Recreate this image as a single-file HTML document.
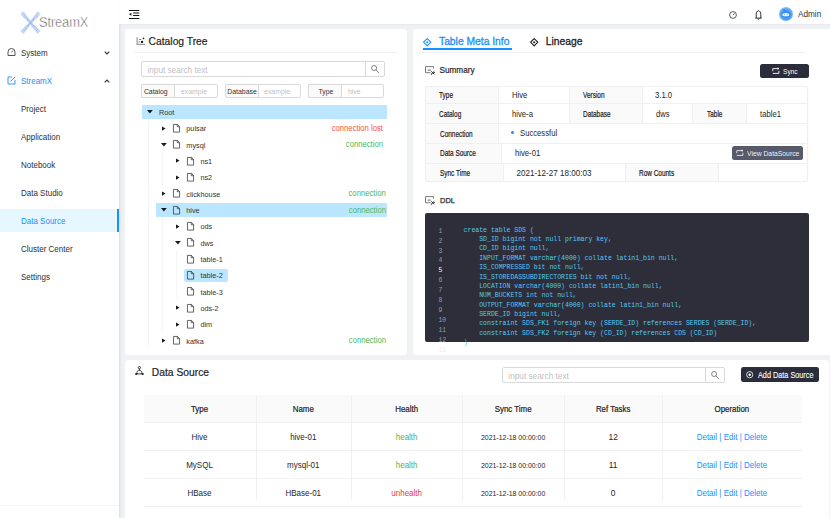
<!DOCTYPE html>
<html><head><meta charset="utf-8">
<style>
*{box-sizing:border-box;margin:0;padding:0}
html,body{width:830px;height:518px;overflow:hidden;background:#f0f1f5;font-family:"Liberation Sans",sans-serif;color:#262626}
#side{position:absolute;left:0;top:0;width:119px;height:518px;background:#fff;box-shadow:1px 0 2px rgba(0,21,41,.10)}
#hdr{position:absolute;left:119px;top:0;width:711px;height:24px;background:#fff;box-shadow:0 1px 2px rgba(0,21,41,.04)}
.card{position:absolute;background:#fff;border-radius:3px}
.t{position:absolute;white-space:nowrap;line-height:1}
svg{position:absolute;overflow:visible}
.mi{font-size:8px;color:#303030;left:21px;transform:scaleY(1.08);transform-origin:0 6.77px}
</style></head><body>
<div id="side">
  <!-- logo -->
  <svg style="left:21px;top:11.5px" width="19" height="21.5" viewBox="0 0 19 21.5"><clipPath id="cl"><rect x="-.5" y="-.5" width="20" height="22.5"/></clipPath><g clip-path="url(#cl)"><path d="M1.5 1.5L17.5 20M17.5 1.5L1.5 20" stroke="#dce8fb" stroke-width="3"/><path d="M2.04 -0.68L9.91 10.39L19.92 19.55" stroke="#a8c4f4" stroke-width=".75" stroke-dasharray="1.3 .6" fill="none"/><path d="M1.30 -0.02L9.71 10.57L19.18 20.21" stroke="#7f9fe8" stroke-width=".75" stroke-dasharray="1.3 .6" fill="none"/><path d="M0.56 0.63L9.50 10.75L18.44 20.87" stroke="#b9d2f7" stroke-width=".75" stroke-dasharray="1.3 .6" fill="none"/><path d="M-0.18 1.29L9.29 10.93L17.70 21.52" stroke="#8aa6ea" stroke-width=".75" stroke-dasharray="1.3 .6" fill="none"/><path d="M-0.92 1.95L9.09 11.11L16.96 22.18" stroke="#a8c4f4" stroke-width=".75" stroke-dasharray="1.3 .6" fill="none"/><path d="M19.92 1.95L9.91 11.11L2.04 22.18" stroke="#a8c4f4" stroke-width=".75" stroke-dasharray="1.3 .6" fill="none"/><path d="M19.18 1.29L9.71 10.93L1.30 21.52" stroke="#7f9fe8" stroke-width=".75" stroke-dasharray="1.3 .6" fill="none"/><path d="M18.44 0.63L9.50 10.75L0.56 20.87" stroke="#b9d2f7" stroke-width=".75" stroke-dasharray="1.3 .6" fill="none"/><path d="M17.70 -0.02L9.29 10.57L-0.18 20.21" stroke="#8aa6ea" stroke-width=".75" stroke-dasharray="1.3 .6" fill="none"/><path d="M16.96 -0.68L9.09 10.39L-0.92 19.55" stroke="#a8c4f4" stroke-width=".75" stroke-dasharray="1.3 .6" fill="none"/></g></svg>
  <svg style="left:39.3px;top:12px" width="50" height="18" viewBox="0 0 50 18"><text x="0" y="15" font-family="Liberation Sans" font-size="14" fill="#3a3a3a" stroke="#fff" stroke-width=".5" transform="scale(.915 1)" letter-spacing="-.1">StreamX</text></svg>
  <!-- System -->
  <svg style="left:7px;top:48px" width="9" height="8" viewBox="0 0 9 8"><path d="M1 7.5V4A3.5 3.5 0 0 1 8 4V7.5Z" fill="none" stroke="#444" stroke-width=".9"/><path d="M4.5 4.5L6 2.5" stroke="#444" stroke-width=".8"/></svg>
  <div class="t mi" style="top:50.0px">System</div>
  <svg style="left:104px;top:51px" width="6" height="4" viewBox="0 0 6 4"><path d="M.7 .7L3 3 5.3 .7" fill="none" stroke="#333" stroke-width="1.1"/></svg>
  <!-- StreamX -->
  <svg style="left:7px;top:76px" width="9" height="9" viewBox="0 0 9 9"><path d="M5 1H1V8H8V4" fill="none" stroke="#1890ff" stroke-width=".9"/><path d="M3.5 5.5L8 1" stroke="#1890ff" stroke-width=".9"/></svg>
  <div class="t mi" style="top:78.0px;color:#1890ff">StreamX</div>
  <svg style="left:104px;top:79px" width="6" height="4" viewBox="0 0 6 4"><path d="M.7 3.3L3 1 5.3 3.3" fill="none" stroke="#333" stroke-width="1.1"/></svg>
  <div class="t mi" style="top:106.0px">Project</div>
  <div class="t mi" style="top:134.0px">Application</div>
  <div class="t mi" style="top:162.0px">Notebook</div>
  <div class="t mi" style="top:190.0px">Data Studio</div>
  <div style="position:absolute;left:0;top:209px;width:119px;height:23px;background:#e6f7ff;border-right:2px solid #1890ff"></div>
  <div class="t mi" style="top:218.0px;color:#1890ff">Data Source</div>
  <div class="t mi" style="top:246.0px">Cluster Center</div>
  <div class="t mi" style="top:274.0px">Settings</div>
  <div style="position:absolute;left:0;top:505px;width:119px;height:1px;background:#f7f7f7"></div>
</div>
<div id="hdr">
  <svg style="left:10px;top:0px" width="11" height="20" viewBox="0 0 11 20"><path d="M0 10.5H10.3M4.1 13H10.3M4.1 15.5H10.3M0 18.5H10.3" stroke="#111" stroke-width="1"/><path d="M0 14.2L2.4 12.7V15.7Z" fill="#111"/></svg>
  <svg style="left:610px;top:10.5px" width="8" height="8" viewBox="0 0 8 8"><circle cx="4" cy="4" r="3.4" fill="none" stroke="#333" stroke-width=".8"/><path d="M4 4L5.5 2.3" stroke="#333" stroke-width=".8"/></svg>
  <svg style="left:635.5px;top:9.5px" width="8" height="10" viewBox="0 0 8 10"><path d="M1.2 8V4.2C1.2 2.4 2.3 .7 3.5 .7S5.8 2.4 5.8 4.2V8M.3 8.1H6.8M2.6 8.8L3.5 9.3 4.4 8.8" fill="none" stroke="#1a1a1a" stroke-width=".9" stroke-linejoin="round"/></svg>
  <div style="position:absolute;left:660px;top:7px;width:14.2px;height:14.2px;border-radius:50%;background:radial-gradient(circle at 50% 55%,#3f92f2 0,#4d9cf4 45%,#8ac6fb 75%,#9dd0fc 100%)"></div>
  <svg style="left:660px;top:7px" width="14" height="14" viewBox="0 0 14 14"><path d="M5 3L6.5 5.2" stroke="#2f7fe6" stroke-width=".8"/><circle cx="4.8" cy="2.8" r=".7" fill="#2f7fe6"/><ellipse cx="7.2" cy="7.6" rx="4.3" ry="3.2" fill="#3a8cf0"/><ellipse cx="6.8" cy="7.7" rx="3.4" ry="1.6" fill="#fff"/><circle cx="5.6" cy="7.7" r=".55" fill="#3a8cf0"/><circle cx="8" cy="7.7" r=".55" fill="#3a8cf0"/></svg>
  <div class="t" style="left:679px;top:10.5px;font-size:8.2px;color:#333;transform:scaleY(1.08);transform-origin:0 6.94px">Admin</div>
</div>

<div class="card" style="left:125px;top:29px;width:282px;height:326px"></div>
<div class="card" style="left:413px;top:29px;width:417px;height:326px;border-radius:3px 0 0 3px"></div>
<div class="card" style="left:125px;top:360px;width:704px;height:158px;border-radius:3px 3px 0 0"></div>
<svg style="left:133px;top:33px" width="16" height="16" viewBox="0 0 16 16"><path d="M4.1 4.2V11.3H12" fill="none" stroke="#9a9a9a" stroke-width="1.2"/><rect x="5.3" y="8.3" width="1.8" height="1.2" fill="#999"/><rect x="6.2" y="6" width="2" height=".9" fill="#666"/><rect x="8" y="7.9" width="2.1" height="2" fill="#111"/><circle cx="10.5" cy="5.4" r=".8" fill="#222"/></svg>
<div class="t" style="left:148.60px;top:36.85px;font-size:10.3px;color:#1f1f1f;transform:scale(1.0,1.07);transform-origin:0 8.65px;-webkit-text-stroke:.2px #1f1f1f">Catalog Tree</div>
<div style="position:absolute;left:135.00px;top:52.00px;width:262.00px;height:1.00px;background:#f0f0f0"></div>
<div style="position:absolute;left:141.00px;top:61.00px;width:243.50px;height:15.50px;border:1px solid #d9d9d9;border-radius:2px"></div>
<div style="position:absolute;left:365.00px;top:61.00px;width:19.50px;height:15.50px;border-left:1px solid #d9d9d9"></div>
<svg style="left:370.5px;top:65px" width="9" height="9" viewBox="0 0 9 9"><circle cx="3.1" cy="3" r="2.5" fill="none" stroke="#666" stroke-width=".8"/><path d="M4.9 4.9L8 7.9" stroke="#666" stroke-width=".8"/></svg>
<div class="t" style="left:147.50px;top:66.90px;font-size:8.2px;color:#bfbfbf;transform:scale(1.0,1.07);transform-origin:0 6.60px;">input search text</div>
<div style="position:absolute;left:141.00px;top:84.30px;width:76.60px;height:13.60px;border:1px solid #d9d9d9;border-radius:2px"></div>
<div style="position:absolute;left:141.00px;top:84.30px;width:34.40px;height:13.60px;background:#fafafa;border:1px solid #d9d9d9;border-radius:2px 0 0 2px"></div>
<div class="t" style="left:143.90px;top:88.55px;font-size:6.9px;color:#333;transform:scale(1.0,1.07);transform-origin:0 5.95px;">Catalog</div>
<div class="t" style="left:181.00px;top:88.55px;font-size:6.9px;color:#bfbfbf;transform:scale(1.0,1.07);transform-origin:0 5.95px;">example</div>
<div style="position:absolute;left:224.50px;top:84.30px;width:76.10px;height:13.60px;border:1px solid #d9d9d9;border-radius:2px"></div>
<div style="position:absolute;left:224.50px;top:84.30px;width:34.00px;height:13.60px;background:#fafafa;border:1px solid #d9d9d9;border-radius:2px 0 0 2px"></div>
<div class="t" style="left:227.30px;top:88.55px;font-size:6.9px;color:#333;transform:scale(1.0,1.07);transform-origin:0 5.95px;">Database</div>
<div class="t" style="left:264.10px;top:88.55px;font-size:6.9px;color:#bfbfbf;transform:scale(1.0,1.07);transform-origin:0 5.95px;">example</div>
<div style="position:absolute;left:307.60px;top:84.30px;width:76.90px;height:13.60px;border:1px solid #d9d9d9;border-radius:2px"></div>
<div style="position:absolute;left:307.60px;top:84.30px;width:34.70px;height:13.60px;background:#fafafa;border:1px solid #d9d9d9;border-radius:2px 0 0 2px"></div>
<div class="t" style="left:318.40px;top:88.55px;font-size:6.9px;color:#333;transform:scale(1.0,1.07);transform-origin:0 5.95px;">Type</div>
<div class="t" style="left:347.90px;top:88.55px;font-size:6.9px;color:#bfbfbf;transform:scale(1.0,1.07);transform-origin:0 5.95px;">hive</div>
<div style="position:absolute;left:148.00px;top:119.00px;width:1.00px;height:228.00px;background:#f5f5f5"></div>
<div style="position:absolute;left:162.00px;top:152.00px;width:1.00px;height:33.00px;background:#f5f5f5"></div>
<div style="position:absolute;left:162.00px;top:217.00px;width:1.00px;height:115.00px;background:#f5f5f5"></div>
<div style="position:absolute;left:176.00px;top:250.00px;width:1.00px;height:49.00px;background:#f5f5f5"></div>
<div style="position:absolute;left:142.00px;top:105.00px;width:245.00px;height:13.80px;background:#bae7ff;border-radius:1px"></div>
<svg style="left:146.50px;top:110.30px" width="6" height="4" viewBox="0 0 6 4"><path d="M0 0H5.8L2.9 3.4Z" fill="#1a1a1a"/></svg>
<div class="t" style="left:158.90px;top:109.35px;font-size:7.3px;color:#333;transform:scale(1.0,1.07);transform-origin:0 6.15px;">Root</div>
<svg style="left:161.80px;top:125.63px" width="4" height="6" viewBox="0 0 4 6"><path d="M0 .4V4.8L3.5 2.6Z" fill="#1a1a1a"/></svg>
<svg style="left:173.20px;top:124.03px" width="7" height="9" viewBox="0 0 7 9"><path d="M.45 .45H4.5L6.6 2.5V8.1H.45Z M4.3 .45V2.7H6.6" fill="none" stroke="#333" stroke-width=".75" stroke-linejoin="round"/></svg>
<div class="t" style="left:186.30px;top:125.35px;font-size:7.3px;color:#333;transform:scale(1.0,1.07);transform-origin:0 6.15px;">pulsar</div>
<div class="t" style="right:447.00px;top:125.15px;font-size:7.7px;color:#f4553c;transform:scale(1.0,1.07);transform-origin:100% 6.35px;">connection lost</div>
<svg style="left:160.50px;top:142.96px" width="6" height="4" viewBox="0 0 6 4"><path d="M0 0H5.8L2.9 3.4Z" fill="#1a1a1a"/></svg>
<svg style="left:173.20px;top:140.36px" width="7" height="9" viewBox="0 0 7 9"><path d="M.45 .45H4.5L6.6 2.5V8.1H.45Z M4.3 .45V2.7H6.6" fill="none" stroke="#333" stroke-width=".75" stroke-linejoin="round"/></svg>
<div class="t" style="left:186.30px;top:142.35px;font-size:7.3px;color:#333;transform:scale(1.0,1.07);transform-origin:0 6.15px;">mysql</div>
<div class="t" style="right:447.00px;top:141.15px;font-size:7.7px;color:#4fb85a;transform:scale(1.0,1.07);transform-origin:100% 6.35px;">connection</div>
<svg style="left:176.10px;top:158.29px" width="4" height="6" viewBox="0 0 4 6"><path d="M0 .4V4.8L3.5 2.6Z" fill="#1a1a1a"/></svg>
<svg style="left:187.30px;top:156.69px" width="7" height="9" viewBox="0 0 7 9"><path d="M.45 .45H4.5L6.6 2.5V8.1H.45Z M4.3 .45V2.7H6.6" fill="none" stroke="#333" stroke-width=".75" stroke-linejoin="round"/></svg>
<div class="t" style="left:200.40px;top:158.35px;font-size:7.3px;color:#333;transform:scale(1.0,1.07);transform-origin:0 6.15px;">ns1</div>
<svg style="left:176.10px;top:174.62px" width="4" height="6" viewBox="0 0 4 6"><path d="M0 .4V4.8L3.5 2.6Z" fill="#1a1a1a"/></svg>
<svg style="left:187.30px;top:173.02px" width="7" height="9" viewBox="0 0 7 9"><path d="M.45 .45H4.5L6.6 2.5V8.1H.45Z M4.3 .45V2.7H6.6" fill="none" stroke="#333" stroke-width=".75" stroke-linejoin="round"/></svg>
<div class="t" style="left:200.40px;top:174.35px;font-size:7.3px;color:#333;transform:scale(1.0,1.07);transform-origin:0 6.15px;">ns2</div>
<svg style="left:161.80px;top:190.95px" width="4" height="6" viewBox="0 0 4 6"><path d="M0 .4V4.8L3.5 2.6Z" fill="#1a1a1a"/></svg>
<svg style="left:173.20px;top:189.35px" width="7" height="9" viewBox="0 0 7 9"><path d="M.45 .45H4.5L6.6 2.5V8.1H.45Z M4.3 .45V2.7H6.6" fill="none" stroke="#333" stroke-width=".75" stroke-linejoin="round"/></svg>
<div class="t" style="left:186.30px;top:191.35px;font-size:7.3px;color:#333;transform:scale(1.0,1.07);transform-origin:0 6.15px;">clickhouse</div>
<div class="t" style="right:444.30px;top:190.15px;font-size:7.7px;color:#4fb85a;transform:scale(1.0,1.07);transform-origin:100% 6.35px;">connection</div>
<div style="position:absolute;left:155.80px;top:202.98px;width:231.20px;height:13.80px;background:#bae7ff;border-radius:1px"></div>
<svg style="left:160.50px;top:208.28px" width="6" height="4" viewBox="0 0 6 4"><path d="M0 0H5.8L2.9 3.4Z" fill="#1a1a1a"/></svg>
<svg style="left:173.20px;top:205.68px" width="7" height="9" viewBox="0 0 7 9"><path d="M.45 .45H4.5L6.6 2.5V8.1H.45Z M4.3 .45V2.7H6.6" fill="none" stroke="#333" stroke-width=".75" stroke-linejoin="round"/></svg>
<div class="t" style="left:186.30px;top:207.35px;font-size:7.3px;color:#333;transform:scale(1.0,1.07);transform-origin:0 6.15px;">hive</div>
<div class="t" style="right:444.00px;top:207.15px;font-size:7.7px;color:#4fb85a;transform:scale(1.0,1.07);transform-origin:100% 6.35px;">connection</div>
<svg style="left:176.10px;top:223.61px" width="4" height="6" viewBox="0 0 4 6"><path d="M0 .4V4.8L3.5 2.6Z" fill="#1a1a1a"/></svg>
<svg style="left:187.30px;top:222.01px" width="7" height="9" viewBox="0 0 7 9"><path d="M.45 .45H4.5L6.6 2.5V8.1H.45Z M4.3 .45V2.7H6.6" fill="none" stroke="#333" stroke-width=".75" stroke-linejoin="round"/></svg>
<div class="t" style="left:200.40px;top:223.35px;font-size:7.3px;color:#333;transform:scale(1.0,1.07);transform-origin:0 6.15px;">ods</div>
<svg style="left:174.80px;top:240.94px" width="6" height="4" viewBox="0 0 6 4"><path d="M0 0H5.8L2.9 3.4Z" fill="#1a1a1a"/></svg>
<svg style="left:187.30px;top:238.34px" width="7" height="9" viewBox="0 0 7 9"><path d="M.45 .45H4.5L6.6 2.5V8.1H.45Z M4.3 .45V2.7H6.6" fill="none" stroke="#333" stroke-width=".75" stroke-linejoin="round"/></svg>
<div class="t" style="left:200.40px;top:240.35px;font-size:7.3px;color:#333;transform:scale(1.0,1.07);transform-origin:0 6.15px;">dws</div>
<svg style="left:187.30px;top:254.67px" width="7" height="9" viewBox="0 0 7 9"><path d="M.45 .45H4.5L6.6 2.5V8.1H.45Z M4.3 .45V2.7H6.6" fill="none" stroke="#333" stroke-width=".75" stroke-linejoin="round"/></svg>
<div class="t" style="left:200.40px;top:256.35px;font-size:7.3px;color:#333;transform:scale(1.0,1.07);transform-origin:0 6.15px;">table-1</div>
<div style="position:absolute;left:184.00px;top:268.60px;width:44.00px;height:13.40px;background:#bae7ff;border-radius:2px"></div>
<svg style="left:187.30px;top:271.00px" width="7" height="9" viewBox="0 0 7 9"><path d="M.45 .45H4.5L6.6 2.5V8.1H.45Z M4.3 .45V2.7H6.6" fill="none" stroke="#333" stroke-width=".75" stroke-linejoin="round"/></svg>
<div class="t" style="left:200.40px;top:272.35px;font-size:7.3px;color:#333;transform:scale(1.0,1.07);transform-origin:0 6.15px;">table-2</div>
<svg style="left:187.30px;top:287.33px" width="7" height="9" viewBox="0 0 7 9"><path d="M.45 .45H4.5L6.6 2.5V8.1H.45Z M4.3 .45V2.7H6.6" fill="none" stroke="#333" stroke-width=".75" stroke-linejoin="round"/></svg>
<div class="t" style="left:200.40px;top:289.35px;font-size:7.3px;color:#333;transform:scale(1.0,1.07);transform-origin:0 6.15px;">table-3</div>
<svg style="left:176.10px;top:305.26px" width="4" height="6" viewBox="0 0 4 6"><path d="M0 .4V4.8L3.5 2.6Z" fill="#1a1a1a"/></svg>
<svg style="left:187.30px;top:303.66px" width="7" height="9" viewBox="0 0 7 9"><path d="M.45 .45H4.5L6.6 2.5V8.1H.45Z M4.3 .45V2.7H6.6" fill="none" stroke="#333" stroke-width=".75" stroke-linejoin="round"/></svg>
<div class="t" style="left:200.40px;top:305.35px;font-size:7.3px;color:#333;transform:scale(1.0,1.07);transform-origin:0 6.15px;">ods-2</div>
<svg style="left:176.10px;top:321.59px" width="4" height="6" viewBox="0 0 4 6"><path d="M0 .4V4.8L3.5 2.6Z" fill="#1a1a1a"/></svg>
<svg style="left:187.30px;top:319.99px" width="7" height="9" viewBox="0 0 7 9"><path d="M.45 .45H4.5L6.6 2.5V8.1H.45Z M4.3 .45V2.7H6.6" fill="none" stroke="#333" stroke-width=".75" stroke-linejoin="round"/></svg>
<div class="t" style="left:200.40px;top:321.35px;font-size:7.3px;color:#333;transform:scale(1.0,1.07);transform-origin:0 6.15px;">dim</div>
<svg style="left:161.80px;top:337.92px" width="4" height="6" viewBox="0 0 4 6"><path d="M0 .4V4.8L3.5 2.6Z" fill="#1a1a1a"/></svg>
<svg style="left:173.20px;top:336.32px" width="7" height="9" viewBox="0 0 7 9"><path d="M.45 .45H4.5L6.6 2.5V8.1H.45Z M4.3 .45V2.7H6.6" fill="none" stroke="#333" stroke-width=".75" stroke-linejoin="round"/></svg>
<div class="t" style="left:186.30px;top:338.35px;font-size:7.3px;color:#333;transform:scale(1.0,1.07);transform-origin:0 6.15px;">kafka</div>
<div class="t" style="right:444.00px;top:337.15px;font-size:7.7px;color:#4fb85a;transform:scale(1.0,1.07);transform-origin:100% 6.35px;">connection</div>
<svg style="left:422.8px;top:37.8px" width="9" height="9" viewBox="0 0 9 9"><path d="M4.2 .6L7.8 4.2 4.2 7.8 .6 4.2Z" fill="none" stroke="#1890ff" stroke-width="1.15" stroke-linejoin="round"/><circle cx="4.2" cy="4.2" r="1.05" fill="#1890ff"/></svg>
<div class="t" style="left:439.00px;top:36.85px;font-size:10.3px;color:#1890ff;transform:scale(1.0,1.07);transform-origin:0 8.65px;-webkit-text-stroke:.3px #1890ff">Table Meta Info</div>
<div style="position:absolute;left:423.00px;top:48.20px;width:89.00px;height:1.80px;background:#1890ff"></div>
<svg style="left:530.3px;top:37.8px" width="9" height="9" viewBox="0 0 9 9"><path d="M4.2 .6L7.8 4.2 4.2 7.8 .6 4.2Z" fill="none" stroke="#1f1f1f" stroke-width="1.15" stroke-linejoin="round"/><circle cx="4.2" cy="4.2" r="1.05" fill="#1f1f1f"/></svg>
<div class="t" style="left:545.80px;top:36.85px;font-size:10.3px;color:#1f1f1f;transform:scale(1.0,1.07);transform-origin:0 8.65px;-webkit-text-stroke:.3px #1f1f1f">Lineage</div>
<div style="position:absolute;left:417.00px;top:52.30px;width:388.00px;height:1.00px;background:#f0f0f0"></div>
<svg style="left:421px;top:62px" width="16" height="16" viewBox="0 0 16 16"><path d="M12.4 6.6V4.6H4.5V10.7H9.6" fill="none" stroke="#7a7a7a" stroke-width="1"/><path d="M6.6 8.1H9.8" stroke="#555" stroke-width=".9"/><path d="M10.3 9.3L13.3 12.2M13.3 9.3L10.3 12.2" stroke="#1a1a1a" stroke-width=".9"/><circle cx="10.5" cy="12" r=".6" fill="#1a1a1a"/><circle cx="13.3" cy="10.5" r=".6" fill="#1a1a1a"/></svg>
<div class="t" style="left:439.50px;top:66.90px;font-size:8.2px;color:#1f1f1f;transform:scale(1.0,1.07);transform-origin:0 6.60px;-webkit-text-stroke:.2px #1f1f1f">Summary</div>
<div style="position:absolute;left:760.20px;top:64.20px;width:48.50px;height:13.70px;background:#2b2d3b;border-radius:2.5px"></div>
<svg style="left:771.6px;top:67.2px" width="8" height="8" viewBox="0 0 8 8"><path d="M.8 4.2V1.6H6.6M.8 6.4H6.9V3.8" fill="none" stroke="#fff" stroke-width=".9"/><path d="M5.6 .2L7.3 1.6 5.6 3Z" fill="#fff"/></svg>
<div class="t" style="left:782.60px;top:68.00px;font-size:8px;color:#fff;transform:scale(0.82,1.0);transform-origin:0 6.50px;">Sync</div>
<div style="position:absolute;left:425.00px;top:86.00px;width:383.00px;height:96.20px;background:#fff;border-radius:3px;box-shadow:0 0 1px rgba(0,0,0,.10)"></div>
<div style="position:absolute;left:425.00px;top:86.00px;width:72.60px;height:17.40px;background:#fafafa"></div>
<div class="t" style="left:439.40px;top:91.20px;font-size:8.6px;color:#1a1a1a;transform:scale(0.75,1.0);transform-origin:0 7.30px;-webkit-text-stroke:.2px #1a1a1a">Type</div>
<div class="t" style="left:511.90px;top:91.95px;font-size:8.1px;color:#262626;transform:scale(0.95,1.07);transform-origin:0 6.55px;">Hive</div>
<div style="position:absolute;left:569.40px;top:86.00px;width:72.80px;height:17.40px;background:#fafafa"></div>
<div class="t" style="left:583.40px;top:91.20px;font-size:8.6px;color:#1a1a1a;transform:scale(0.75,1.0);transform-origin:0 7.30px;-webkit-text-stroke:.2px #1a1a1a">Version</div>
<div class="t" style="left:655.00px;top:91.95px;font-size:8.1px;color:#262626;transform:scale(0.95,1.07);transform-origin:0 6.55px;">3.1.0</div>
<div style="position:absolute;left:425.00px;top:103.40px;width:72.60px;height:20.00px;background:#fafafa"></div>
<div class="t" style="left:439.40px;top:110.20px;font-size:8.6px;color:#1a1a1a;transform:scale(0.75,1.0);transform-origin:0 7.30px;-webkit-text-stroke:.2px #1a1a1a">Catalog</div>
<div class="t" style="left:511.90px;top:110.95px;font-size:8.1px;color:#262626;transform:scale(0.95,1.07);transform-origin:0 6.55px;">hive-a</div>
<div style="position:absolute;left:569.40px;top:103.40px;width:72.80px;height:20.00px;background:#fafafa"></div>
<div class="t" style="left:583.40px;top:110.20px;font-size:8.6px;color:#1a1a1a;transform:scale(0.75,1.0);transform-origin:0 7.30px;-webkit-text-stroke:.2px #1a1a1a">Database</div>
<div class="t" style="left:656.00px;top:110.95px;font-size:8.1px;color:#262626;transform:scale(0.95,1.07);transform-origin:0 6.55px;">dws</div>
<div style="position:absolute;left:692.30px;top:103.40px;width:53.70px;height:20.00px;background:#fafafa"></div>
<div class="t" style="left:706.70px;top:110.20px;font-size:8.6px;color:#1a1a1a;transform:scale(0.75,1.0);transform-origin:0 7.30px;-webkit-text-stroke:.2px #1a1a1a">Table</div>
<div class="t" style="left:759.80px;top:110.95px;font-size:8.1px;color:#262626;transform:scale(0.95,1.07);transform-origin:0 6.55px;">table1</div>
<div style="position:absolute;left:425.00px;top:123.40px;width:72.60px;height:19.50px;background:#fafafa"></div>
<div class="t" style="left:439.80px;top:130.20px;font-size:8.6px;color:#1a1a1a;transform:scale(0.75,1.0);transform-origin:0 7.30px;-webkit-text-stroke:.2px #1a1a1a">Connection</div>
<div style="position:absolute;left:511.30px;top:131.30px;width:3.20px;height:3.20px;background:#1890ff;border-radius:50%"></div>
<div class="t" style="left:520.00px;top:129.95px;font-size:8.1px;color:#262626;transform:scale(0.95,1.07);transform-origin:0 6.55px;">Successful</div>
<div style="position:absolute;left:425.00px;top:142.90px;width:75.70px;height:20.00px;background:#fafafa"></div>
<div class="t" style="left:439.80px;top:149.20px;font-size:8.6px;color:#1a1a1a;transform:scale(0.75,1.0);transform-origin:0 7.30px;-webkit-text-stroke:.2px #1a1a1a">Data Source</div>
<div class="t" style="left:514.70px;top:149.95px;font-size:8.1px;color:#262626;transform:scale(0.95,1.07);transform-origin:0 6.55px;">hive-01</div>
<div style="position:absolute;left:732.40px;top:146.00px;width:70.60px;height:13.80px;background:#575a6b;border-radius:2.5px"></div>
<svg style="left:735.8px;top:149.4px" width="8" height="8" viewBox="0 0 8 8"><path d="M.8 4.2V1.6H6.6M.8 6.4H6.9V3.8" fill="none" stroke="#e8e8ec" stroke-width=".9"/><path d="M5.6 .2L7.3 1.6 5.6 3Z" fill="#e8e8ec"/></svg>
<div class="t" style="left:746.50px;top:150.35px;font-size:7.3px;color:#f0f0f3;transform:scale(0.93,1.0);transform-origin:0 6.15px;">View DataSource</div>
<div style="position:absolute;left:425.00px;top:162.90px;width:77.70px;height:19.30px;background:#fafafa"></div>
<div class="t" style="left:439.80px;top:169.20px;font-size:8.6px;color:#1a1a1a;transform:scale(0.75,1.0);transform-origin:0 7.30px;-webkit-text-stroke:.2px #1a1a1a">Sync Time</div>
<div class="t" style="left:516.40px;top:169.95px;font-size:8.1px;color:#262626;transform:scale(1.0,1.07);transform-origin:0 6.55px;">2021-12-27 18:00:03</div>
<div style="position:absolute;left:625.20px;top:162.90px;width:92.50px;height:19.30px;background:#fafafa"></div>
<div class="t" style="left:639.00px;top:169.20px;font-size:8.6px;color:#1a1a1a;transform:scale(0.75,1.0);transform-origin:0 7.30px;-webkit-text-stroke:.2px #1a1a1a">Row Counts</div>
<div style="position:absolute;left:425.00px;top:103.40px;width:383.00px;height:0.80px;background:#f0f0f0"></div>
<div style="position:absolute;left:425.00px;top:123.40px;width:383.00px;height:0.80px;background:#f0f0f0"></div>
<div style="position:absolute;left:425.00px;top:142.90px;width:383.00px;height:0.80px;background:#f0f0f0"></div>
<div style="position:absolute;left:425.00px;top:162.90px;width:383.00px;height:0.80px;background:#f0f0f0"></div>
<div style="position:absolute;left:497.60px;top:86.00px;width:0.80px;height:56.90px;background:#f0f0f0"></div>
<div style="position:absolute;left:569.40px;top:86.00px;width:0.80px;height:37.40px;background:#f0f0f0"></div>
<div style="position:absolute;left:642.20px;top:86.00px;width:0.80px;height:37.40px;background:#f0f0f0"></div>
<div style="position:absolute;left:692.30px;top:103.40px;width:0.80px;height:20.00px;background:#f0f0f0"></div>
<div style="position:absolute;left:746.00px;top:103.40px;width:0.80px;height:20.00px;background:#f0f0f0"></div>
<div style="position:absolute;left:500.70px;top:142.90px;width:0.80px;height:20.00px;background:#f0f0f0"></div>
<div style="position:absolute;left:502.70px;top:162.90px;width:0.80px;height:19.30px;background:#f0f0f0"></div>
<div style="position:absolute;left:625.20px;top:162.90px;width:0.80px;height:19.30px;background:#f0f0f0"></div>
<div style="position:absolute;left:717.70px;top:162.90px;width:0.80px;height:19.30px;background:#f0f0f0"></div>
<div style="position:absolute;left:425.00px;top:86.00px;width:383.00px;height:96.20px;border:1px solid #f0f0f0;border-radius:3px"></div>
<svg style="left:421px;top:192.3px" width="16" height="16" viewBox="0 0 16 16"><path d="M12.4 6.6V4.6H4.5V10.7H9.6" fill="none" stroke="#7a7a7a" stroke-width="1"/><path d="M6.6 8.1H9.8" stroke="#555" stroke-width=".9"/><path d="M10.3 9.3L13.3 12.2M13.3 9.3L10.3 12.2" stroke="#1a1a1a" stroke-width=".9"/><circle cx="10.5" cy="12" r=".6" fill="#1a1a1a"/><circle cx="13.3" cy="10.5" r=".6" fill="#1a1a1a"/></svg>
<div class="t" style="left:439.50px;top:196.95px;font-size:8.1px;color:#1f1f1f;transform:scale(0.92,1.0);transform-origin:0 6.55px;-webkit-text-stroke:.25px #1f1f1f">DDL</div>
<div style="position:absolute;left:425.00px;top:213.00px;width:384.00px;height:129.00px;background:#2d2e3a;border-radius:2px"></div>
<div class="t" style="left:438.40px;top:228.80px;font-size:6.4px;color:#9a9ca6;transform:scale(1.0,1.07);transform-origin:0 5.70px;font-family:'Liberation Mono',monospace">1</div>
<div class="t" style="left:463.60px;top:227.75px;font-size:6.5px;color:#55c8f4;transform:scale(1.0,1.07);transform-origin:0 5.75px;font-family:'Liberation Mono',monospace">create&nbsp;table&nbsp;SDS&nbsp;(</div>
<div class="t" style="left:438.40px;top:238.80px;font-size:6.4px;color:#9a9ca6;transform:scale(1.0,1.07);transform-origin:0 5.70px;font-family:'Liberation Mono',monospace">2</div>
<div class="t" style="left:463.60px;top:236.75px;font-size:6.5px;color:#55c8f4;transform:scale(1.0,1.07);transform-origin:0 5.75px;font-family:'Liberation Mono',monospace">&nbsp;&nbsp;&nbsp;&nbsp;SD_ID&nbsp;bigint&nbsp;not&nbsp;null&nbsp;primary&nbsp;key,</div>
<div class="t" style="left:438.40px;top:248.80px;font-size:6.4px;color:#9a9ca6;transform:scale(1.0,1.07);transform-origin:0 5.70px;font-family:'Liberation Mono',monospace">3</div>
<div class="t" style="left:463.60px;top:245.75px;font-size:6.5px;color:#55c8f4;transform:scale(1.0,1.07);transform-origin:0 5.75px;font-family:'Liberation Mono',monospace">&nbsp;&nbsp;&nbsp;&nbsp;CD_ID&nbsp;bigint&nbsp;null,</div>
<div class="t" style="left:438.40px;top:257.80px;font-size:6.4px;color:#9a9ca6;transform:scale(1.0,1.07);transform-origin:0 5.70px;font-family:'Liberation Mono',monospace">4</div>
<div class="t" style="left:463.60px;top:255.75px;font-size:6.5px;color:#55c8f4;transform:scale(1.0,1.07);transform-origin:0 5.75px;font-family:'Liberation Mono',monospace">&nbsp;&nbsp;&nbsp;&nbsp;INPUT_FORMAT&nbsp;varchar(4000)&nbsp;collate&nbsp;latin1_bin&nbsp;null,</div>
<div class="t" style="left:438.40px;top:267.80px;font-size:6.4px;color:#ffffff;transform:scale(1.0,1.07);transform-origin:0 5.70px;font-family:'Liberation Mono',monospace">5</div>
<div class="t" style="left:463.60px;top:264.75px;font-size:6.5px;color:#55c8f4;transform:scale(1.0,1.07);transform-origin:0 5.75px;font-family:'Liberation Mono',monospace">&nbsp;&nbsp;&nbsp;&nbsp;IS_COMPRESSED&nbsp;bit&nbsp;not&nbsp;null,</div>
<div class="t" style="left:438.40px;top:277.80px;font-size:6.4px;color:#9a9ca6;transform:scale(1.0,1.07);transform-origin:0 5.70px;font-family:'Liberation Mono',monospace">6</div>
<div class="t" style="left:463.60px;top:274.75px;font-size:6.5px;color:#55c8f4;transform:scale(1.0,1.07);transform-origin:0 5.75px;font-family:'Liberation Mono',monospace">&nbsp;&nbsp;&nbsp;&nbsp;IS_STOREDASSUBDIRECTORIES&nbsp;bit&nbsp;not&nbsp;null,</div>
<div class="t" style="left:438.40px;top:287.80px;font-size:6.4px;color:#9a9ca6;transform:scale(1.0,1.07);transform-origin:0 5.70px;font-family:'Liberation Mono',monospace">7</div>
<div class="t" style="left:463.60px;top:283.75px;font-size:6.5px;color:#55c8f4;transform:scale(1.0,1.07);transform-origin:0 5.75px;font-family:'Liberation Mono',monospace">&nbsp;&nbsp;&nbsp;&nbsp;LOCATION&nbsp;varchar(4000)&nbsp;collate&nbsp;latin1_bin&nbsp;null,</div>
<div class="t" style="left:438.40px;top:297.80px;font-size:6.4px;color:#9a9ca6;transform:scale(1.0,1.07);transform-origin:0 5.70px;font-family:'Liberation Mono',monospace">8</div>
<div class="t" style="left:463.60px;top:292.75px;font-size:6.5px;color:#55c8f4;transform:scale(1.0,1.07);transform-origin:0 5.75px;font-family:'Liberation Mono',monospace">&nbsp;&nbsp;&nbsp;&nbsp;NUM_BUCKETS&nbsp;int&nbsp;not&nbsp;null,</div>
<div class="t" style="left:438.40px;top:307.80px;font-size:6.4px;color:#9a9ca6;transform:scale(1.0,1.07);transform-origin:0 5.70px;font-family:'Liberation Mono',monospace">9</div>
<div class="t" style="left:463.60px;top:302.75px;font-size:6.5px;color:#55c8f4;transform:scale(1.0,1.07);transform-origin:0 5.75px;font-family:'Liberation Mono',monospace">&nbsp;&nbsp;&nbsp;&nbsp;OUTPUT_FORMAT&nbsp;varchar(4000)&nbsp;collate&nbsp;latin1_bin&nbsp;null,</div>
<div class="t" style="left:438.40px;top:317.80px;font-size:6.4px;color:#9a9ca6;transform:scale(1.0,1.07);transform-origin:0 5.70px;font-family:'Liberation Mono',monospace">10</div>
<div class="t" style="left:463.60px;top:311.75px;font-size:6.5px;color:#55c8f4;transform:scale(1.0,1.07);transform-origin:0 5.75px;font-family:'Liberation Mono',monospace">&nbsp;&nbsp;&nbsp;&nbsp;SERDE_ID&nbsp;bigint&nbsp;null,</div>
<div class="t" style="left:438.40px;top:327.80px;font-size:6.4px;color:#9a9ca6;transform:scale(1.0,1.07);transform-origin:0 5.70px;font-family:'Liberation Mono',monospace">11</div>
<div class="t" style="left:463.60px;top:320.75px;font-size:6.5px;color:#55c8f4;transform:scale(1.0,1.07);transform-origin:0 5.75px;font-family:'Liberation Mono',monospace">&nbsp;&nbsp;&nbsp;&nbsp;constraint&nbsp;SDS_FK1&nbsp;foreign&nbsp;key&nbsp;(SERDE_ID)&nbsp;references&nbsp;SERDES&nbsp;(SERDE_ID),</div>
<div class="t" style="left:438.40px;top:337.80px;font-size:6.4px;color:#9a9ca6;transform:scale(1.0,1.07);transform-origin:0 5.70px;font-family:'Liberation Mono',monospace">12</div>
<div class="t" style="left:463.60px;top:330.75px;font-size:6.5px;color:#55c8f4;transform:scale(1.0,1.07);transform-origin:0 5.75px;font-family:'Liberation Mono',monospace">&nbsp;&nbsp;&nbsp;&nbsp;constraint&nbsp;SDS_FK2&nbsp;foreign&nbsp;key&nbsp;(CD_ID)&nbsp;references&nbsp;CDS&nbsp;(CD_ID)</div>
<div class="t" style="left:438.40px;top:347.80px;font-size:6.4px;color:#ededf0;transform:scale(1.0,1.07);transform-origin:0 5.70px;font-family:'Liberation Mono',monospace">13</div>
<div class="t" style="left:463.80px;top:339.75px;font-size:6.5px;color:#3fb0ea;transform:scale(1.0,1.07);transform-origin:0 5.75px;font-family:'Liberation Mono',monospace">)</div>
<svg style="left:132px;top:363px" width="16" height="16" viewBox="0 0 16 16"><circle cx="7.4" cy="4.6" r="1.1" fill="none" stroke="#1a1a1a" stroke-width=".85"/><path d="M7.4 5.7V7.3M5.2 10.8A2.44 2.44 0 1 1 9.6 10.8M4.2 10.9H10.6" fill="none" stroke="#1a1a1a" stroke-width=".85"/><rect x="3.3" y="10.1" width="1.7" height="1.8" fill="#1a1a1a"/><rect x="9.9" y="10.1" width="1.7" height="1.8" fill="#1a1a1a"/></svg>
<div class="t" style="left:151.80px;top:367.85px;font-size:10.3px;color:#1f1f1f;transform:scale(1.0,1.07);transform-origin:0 8.65px;-webkit-text-stroke:.2px #1f1f1f">Data Source</div>
<div style="position:absolute;left:501.50px;top:367.00px;width:223.10px;height:15.60px;border:1px solid #d9d9d9;border-radius:2px"></div>
<div style="position:absolute;left:705.00px;top:367.00px;width:19.60px;height:15.60px;border-left:1px solid #d9d9d9"></div>
<svg style="left:711px;top:370.8px" width="9" height="9" viewBox="0 0 9 9"><circle cx="3.1" cy="3" r="2.5" fill="none" stroke="#666" stroke-width=".8"/><path d="M4.9 4.9L8 7.9" stroke="#666" stroke-width=".8"/></svg>
<div class="t" style="left:508.30px;top:372.88px;font-size:8.25px;color:#bfbfbf;transform:scale(1.0,1.07);transform-origin:0 6.62px;">input search text</div>
<div style="position:absolute;left:740.90px;top:367.10px;width:78.10px;height:15.20px;background:#2b2d3b;border-radius:2.5px"></div>
<svg style="left:746.3px;top:371px" width="8" height="8" viewBox="0 0 8 8"><circle cx="3.7" cy="3.7" r="3.1" fill="none" stroke="#fff" stroke-width=".8"/><circle cx="3.7" cy="3.7" r="1.2" fill="#fff"/></svg>
<div class="t" style="left:757.50px;top:371.90px;font-size:8.2px;color:#fff;transform:scale(0.89,1.0);transform-origin:0 6.60px;-webkit-text-stroke:.1px #fff">Add Data Source</div>
<div style="position:absolute;left:143.50px;top:395.00px;width:658.00px;height:27.30px;background:#fafafa"></div>
<div class="t" style="left:99.50px;width:200px;text-align:center;top:406.05px;font-size:7.9px;color:#1f1f1f;transform:scale(1.0,1.07);transform-origin:50% 6.45px;-webkit-text-stroke:.2px #1f1f1f">Type</div>
<div class="t" style="left:203.25px;width:200px;text-align:center;top:406.05px;font-size:7.9px;color:#1f1f1f;transform:scale(1.0,1.07);transform-origin:50% 6.45px;-webkit-text-stroke:.2px #1f1f1f">Name</div>
<div class="t" style="left:306.65px;width:200px;text-align:center;top:406.05px;font-size:7.9px;color:#1f1f1f;transform:scale(1.0,1.07);transform-origin:50% 6.45px;-webkit-text-stroke:.2px #1f1f1f">Health</div>
<div class="t" style="left:413.15px;width:200px;text-align:center;top:406.05px;font-size:7.9px;color:#1f1f1f;transform:scale(1.0,1.07);transform-origin:50% 6.45px;-webkit-text-stroke:.2px #1f1f1f">Sync Time</div>
<div class="t" style="left:513.15px;width:200px;text-align:center;top:406.05px;font-size:7.9px;color:#1f1f1f;transform:scale(1.0,1.07);transform-origin:50% 6.45px;-webkit-text-stroke:.2px #1f1f1f">Ref Tasks</div>
<div class="t" style="left:631.90px;width:200px;text-align:center;top:406.05px;font-size:7.9px;color:#1f1f1f;transform:scale(1.0,1.07);transform-origin:50% 6.45px;-webkit-text-stroke:.2px #1f1f1f">Operation</div>
<div class="t" style="left:99.50px;width:200px;text-align:center;top:434.00px;font-size:8px;color:#262626;transform:scale(1.0,1.07);transform-origin:50% 6.50px;">Hive</div>
<div class="t" style="left:203.25px;width:200px;text-align:center;top:434.00px;font-size:8px;color:#262626;transform:scale(1.0,1.07);transform-origin:50% 6.50px;">hive-01</div>
<div class="t" style="left:306.65px;width:200px;text-align:center;top:434.00px;font-size:8px;color:#4fb356;transform:scale(1.0,1.07);transform-origin:50% 6.50px;">health</div>
<div class="t" style="left:413.15px;width:200px;text-align:center;top:434.52px;font-size:6.95px;color:#262626;transform:scale(1.0,1.07);transform-origin:50% 5.97px;">2021-12-18 00:00:00</div>
<div class="t" style="left:513.15px;width:200px;text-align:center;top:433.30px;font-size:8.4px;color:#262626;transform:scale(1.0,1.07);transform-origin:50% 7.20px;">12</div>
<div class="t" style="left:631.90px;width:200px;text-align:center;top:434.00px;font-size:8px;color:#1890ff;transform:scale(1.0,1.07);transform-origin:50% 6.50px;">Detail | Edit | Delete</div>
<div class="t" style="left:99.50px;width:200px;text-align:center;top:462.00px;font-size:8px;color:#262626;transform:scale(1.0,1.07);transform-origin:50% 6.50px;">MySQL</div>
<div class="t" style="left:203.25px;width:200px;text-align:center;top:462.00px;font-size:8px;color:#262626;transform:scale(1.0,1.07);transform-origin:50% 6.50px;">mysql-01</div>
<div class="t" style="left:306.65px;width:200px;text-align:center;top:462.00px;font-size:8px;color:#4fb356;transform:scale(1.0,1.07);transform-origin:50% 6.50px;">health</div>
<div class="t" style="left:413.15px;width:200px;text-align:center;top:462.52px;font-size:6.95px;color:#262626;transform:scale(1.0,1.07);transform-origin:50% 5.97px;">2021-12-18 00:00:00</div>
<div class="t" style="left:513.15px;width:200px;text-align:center;top:461.30px;font-size:8.4px;color:#262626;transform:scale(1.0,1.07);transform-origin:50% 7.20px;">11</div>
<div class="t" style="left:631.90px;width:200px;text-align:center;top:462.00px;font-size:8px;color:#1890ff;transform:scale(1.0,1.07);transform-origin:50% 6.50px;">Detail | Edit | Delete</div>
<div class="t" style="left:99.50px;width:200px;text-align:center;top:490.00px;font-size:8px;color:#262626;transform:scale(1.0,1.07);transform-origin:50% 6.50px;">HBase</div>
<div class="t" style="left:203.25px;width:200px;text-align:center;top:490.00px;font-size:8px;color:#262626;transform:scale(1.0,1.07);transform-origin:50% 6.50px;">HBase-01</div>
<div class="t" style="left:306.65px;width:200px;text-align:center;top:490.00px;font-size:8px;color:#e8393f;transform:scale(1.0,1.07);transform-origin:50% 6.50px;">unhealth</div>
<div class="t" style="left:413.15px;width:200px;text-align:center;top:490.52px;font-size:6.95px;color:#262626;transform:scale(1.0,1.07);transform-origin:50% 5.97px;">2021-12-18 00:00:00</div>
<div class="t" style="left:513.15px;width:200px;text-align:center;top:489.30px;font-size:8.4px;color:#262626;transform:scale(1.0,1.07);transform-origin:50% 7.20px;">0</div>
<div class="t" style="left:631.90px;width:200px;text-align:center;top:490.00px;font-size:8px;color:#1890ff;transform:scale(1.0,1.07);transform-origin:50% 6.50px;">Detail | Edit | Delete</div>
<div style="position:absolute;left:143.50px;top:422.30px;width:658.00px;height:0.80px;background:#f0f0f0"></div>
<div style="position:absolute;left:143.50px;top:450.40px;width:658.00px;height:0.80px;background:#f0f0f0"></div>
<div style="position:absolute;left:143.50px;top:478.40px;width:658.00px;height:0.80px;background:#f0f0f0"></div>
<div style="position:absolute;left:255.50px;top:395.00px;width:0.80px;height:105.00px;background:#f0f0f0"></div>
<div style="position:absolute;left:351.00px;top:395.00px;width:0.80px;height:105.00px;background:#f0f0f0"></div>
<div style="position:absolute;left:462.30px;top:395.00px;width:0.80px;height:105.00px;background:#f0f0f0"></div>
<div style="position:absolute;left:564.00px;top:395.00px;width:0.80px;height:105.00px;background:#f0f0f0"></div>
<div style="position:absolute;left:662.30px;top:395.00px;width:0.80px;height:105.00px;background:#f0f0f0"></div>
<div style="position:absolute;left:143.50px;top:505.60px;width:658.00px;height:1.80px;background:#f0f0f0"></div>
</body></html>
